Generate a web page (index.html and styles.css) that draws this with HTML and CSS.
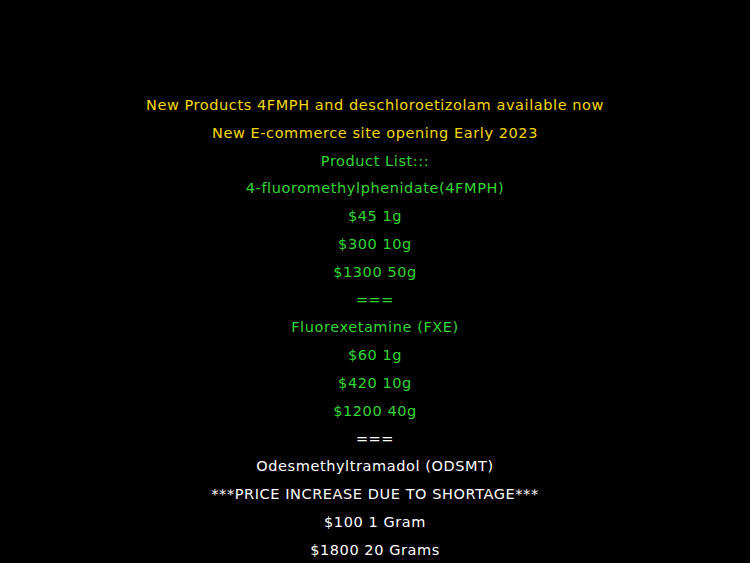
FILE: index.html
```html
<!DOCTYPE html>
<html lang="en">
<head>
    <meta charset="UTF-8">
    <meta name="viewport" content="width=device-width, initial-scale=1.0">
    <title>Product List</title>
    <link rel="stylesheet" href="styles.css">
</head>
<body>
    <div class="content">
        <p class="amarelo">New Products 4FMPH and deschloroetizolam available now</p>
        <p class="amarelo">New E-commerce site opening Early 2023</p>
        <p class="verde">Product List:::</p>
        <p class="verde">4-fluoromethylphenidate(4FMPH)</p>
        <p class="verde">$45 1g</p>
        <p class="verde">$300 10g</p>
        <p class="verde">$1300 50g</p>
        <p class="verde">===</p>
        <p class="verde">Fluorexetamine (FXE)</p>
        <p class="verde">$60 1g</p>
        <p class="verde">$420 10g</p>
        <p class="verde">$1200 40g</p>
        <p class="branco">===</p>
        <p class="branco">Odesmethyltramadol (ODSMT)</p>
        <p class="branco">***PRICE INCREASE DUE TO SHORTAGE***</p>
        <p class="branco">$100 1 Gram</p>
        <p class="branco">$1800 20 Grams</p>
    </div>
</body>
</html>
```

FILE: styles.css
```css
body {
    margin: 0;
    background-color: #000;
    font-family: 'DejaVu Sans', sans-serif;
    text-align: center;
}
.content {
    padding-top: 92px;
}
p {
    margin: 0;
    font-size: 14.5px;
    line-height: 27.8px;
    letter-spacing: 0.58px;
}
.amarelo {
    color: #f5d80a;
}
.verde {
    color: #33d633;
}
.branco {
    color: #fff;
}
```
